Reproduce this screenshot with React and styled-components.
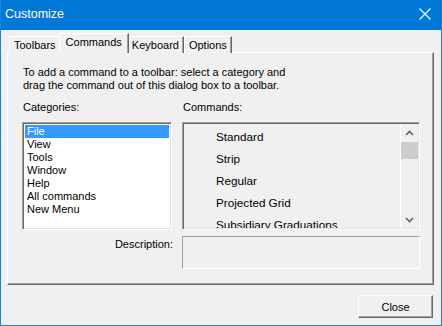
import React from 'react';
import styled, {createGlobalStyle} from 'styled-components';

const GlobalStyle = createGlobalStyle`
  html, body {
    margin: 0;
    padding: 0;
    background: #f0f0f0;
  }
`;

const Window = styled.div`
  width: 442px;
  height: 326px;
  box-sizing: border-box;
  display: flex;
  flex-direction: column;
  background: #f0f0f0;
  border: 1px solid #1883d7;
  border-top: none;
  font-family: "Liberation Sans", Arial, sans-serif;
  font-size: 11px;
  color: #000;
`;

const TitleBar = styled.div`
  height: 28px;
  background: #0078d7;
  display: flex;
  align-items: center;
  justify-content: space-between;
  padding: 0 0 2px 4px;
  color: #fff;
  font-size: 12.5px;
`;

const CloseX = styled.div`
  width: 30px;
  height: 28px;
  display: flex;
  align-items: center;
  justify-content: center;
  margin-right: 1px;
`;

const Body = styled.div`
  flex: 1;
  display: flex;
  flex-direction: column;
  padding: 3px 7px 0 6px;
`;

const TabRow = styled.div`
  display: flex;
  align-items: flex-end;
  height: 20px;
  padding-left: 2px;
  position: relative;
  z-index: 1;
  margin-bottom: -1px;
`;

const Tab = styled.div`
  box-sizing: border-box;
  height: ${props => props.active ? '20px' : '17px'};
  margin: ${props => props.active ? '0 -2px' : '0'};
  padding: ${props => props.active ? '2px 6px 0' : '2px 4px 0'};
  position: relative;
  z-index: ${props => props.active ? 2 : 1};
  background: #f0f0f0;
  border: 1px solid #fff;
  border-right: 1px solid #696969;
  border-bottom: none;
  box-shadow: inset -1px 0 0 #a0a0a0;
  font-size: 11px;
  line-height: 13px;
`;

const Panel = styled.div`
  box-sizing: border-box;
  height: 233px;
  border: 1px solid #fff;
  border-right-color: #696969;
  border-bottom-color: #696969;
  box-shadow: inset -1px -1px 0 #a0a0a0;
  padding: 13px 13px 0 14px;
  display: grid;
  grid-template-columns: 150px 238px;
  column-gap: 10px;
  grid-template-rows: auto auto 108px auto;
  align-content: start;
`;

const Intro = styled.div`
  grid-column: 1 / 3;
  line-height: 13px;
  padding-left: 1px;
`;

const Label = styled.div`
  padding: 9px 0 8px 1px;
  line-height: 13px;
`;

const Sunken = styled.div`
  box-sizing: border-box;
  border: 1px solid #a0a0a0;
  border-right-color: #fff;
  border-bottom-color: #fff;
  box-shadow: inset 1px 1px 0 #696969, inset -1px -1px 0 #e3e3e3;
`;

const ListBox = styled(Sunken)`
  background: #fff;
  padding: 2px;
`;

const CategoryItem = styled.div`
  height: 13px;
  line-height: 13px;
  padding-left: 2px;
  background: ${props => props.selected ? '#3399ff' : 'transparent'};
  color: ${props => props.selected ? '#fff' : '#000'};
`;

const CommandBox = styled(Sunken)`
  background: #f0f0f0;
  display: flex;
  padding: 2px 1px 1px 2px;
  overflow: hidden;
`;

const CommandList = styled.div`
  flex: 1;
  padding-top: 1px;
  overflow: hidden;
`;

const CommandItem = styled.div`
  height: 22px;
  line-height: 22px;
  padding-left: 31px;
  font-size: 11.7px;
  white-space: nowrap;
`;

const ScrollBar = styled.div`
  width: 17px;
  display: flex;
  flex-direction: column;
  border-left: 1px solid #fff;
`;

const Arrow = styled.div`
  height: 16px;
  display: flex;
  align-items: center;
  justify-content: center;
`;

const Track = styled.div`
  flex: 1;
  padding-top: 1px;
`;

const Thumb = styled.div`
  height: 17px;
  background: #cdcdcd;
`;

const DescLabel = styled.div`
  text-align: right;
  padding-top: 8px;
  line-height: 13px;
  margin-right: -1px;
`;

const DescBox = styled(Sunken)`
  height: 33px;
  margin-top: 6px;
  box-shadow: inset -1px -1px 0 #f0f0f0;
`;

const Footer = styled.div`
  display: flex;
  justify-content: flex-end;
  padding: 10px 1px 0 0;
`;

const Button = styled.div`
  box-sizing: border-box;
  width: 75px;
  height: 23px;
  display: flex;
  align-items: center;
  justify-content: center;
  border: 1px solid #fff;
  border-right-color: #696969;
  border-bottom-color: #696969;
  box-shadow: inset -1px -1px 0 #a0a0a0;
  font-size: 11px;
`;

const ArrowIcon = ({up}) => (
  <svg width="9" height="6" viewBox="0 0 9 6">
    <path d={up ? 'M1 5 L4.5 1.5 L8 5' : 'M1 1 L4.5 4.5 L8 1'} stroke="#606060" strokeWidth="1.6" fill="none"/>
  </svg>
);

const categories = ['File', 'View', 'Tools', 'Window', 'Help', 'All commands', 'New Menu'];
const commands = ['Standard', 'Strip', 'Regular', 'Projected Grid', 'Subsidiary Graduations'];
const tabs = ['Toolbars', 'Commands', 'Keyboard', 'Options'];

const App = () => {
  return (
    <Window>
      <GlobalStyle/>
      <TitleBar>
        <span>Customize</span>
        <CloseX>
          <svg width="12" height="12" viewBox="0 0 12 12">
            <path d="M0.5 0.5 L11.5 11.5 M11.5 0.5 L0.5 11.5" stroke="#fff" strokeWidth="1.1"/>
          </svg>
        </CloseX>
      </TitleBar>
      <Body>
        <TabRow>
          {tabs.map(t => <Tab key={t} active={t === 'Commands'}>{t}</Tab>)}
        </TabRow>
        <Panel>
          <Intro>
            To add a command to a toolbar: select a category and<br/>
            drag the command out of this dialog box to a toolbar.
          </Intro>
          <Label>Categories:</Label>
          <Label>Commands:</Label>
          <ListBox>
            {categories.map((c, i) => <CategoryItem key={c} selected={i === 0}>{c}</CategoryItem>)}
          </ListBox>
          <CommandBox>
            <CommandList>
              {commands.map(c => <CommandItem key={c}>{c}</CommandItem>)}
            </CommandList>
            <ScrollBar>
              <Arrow><ArrowIcon up/></Arrow>
              <Track><Thumb/></Track>
              <Arrow><ArrowIcon/></Arrow>
            </ScrollBar>
          </CommandBox>
          <DescLabel>Description:</DescLabel>
          <DescBox/>
        </Panel>
        <Footer>
          <Button>Close</Button>
        </Footer>
      </Body>
    </Window>
  );
};

export default App;
